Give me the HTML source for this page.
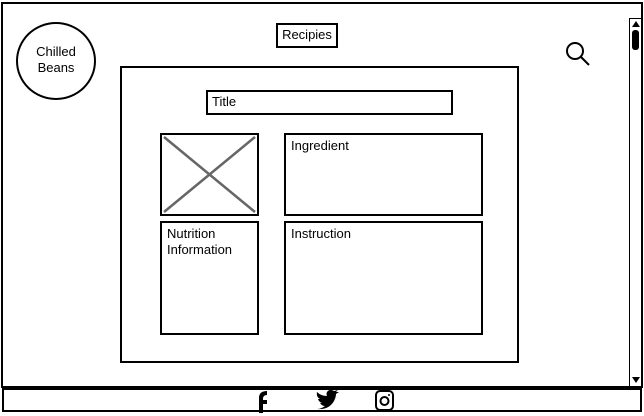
<!DOCTYPE html>
<html><head><style>
body{margin:0;width:644px;height:416px;background:#fff;position:relative;overflow:hidden;font-family:"Liberation Sans",sans-serif;font-size:13px;color:#000}
.b{position:absolute;border:2px solid #000;box-sizing:border-box;background:#fff}
.t{position:absolute;font-size:13px}
</style></head><body>
<div class="b" style="left:1px;top:2px;width:642px;height:386px;border-width:2px"></div>
<div class="b" style="left:629px;top:18px;width:13px;height:369px;border-width:1px"></div>
<div style="position:absolute;left:632px;top:21px;width:0;height:0;border-left:4px solid transparent;border-right:4px solid transparent;border-bottom:6px solid #000"></div>
<div style="position:absolute;left:632px;top:30px;width:7px;height:20px;background:#000;border-radius:3px"></div>
<div style="position:absolute;left:632px;top:377px;width:0;height:0;border-left:4px solid transparent;border-right:4px solid transparent;border-top:6px solid #000"></div>
<div class="b" style="left:16px;top:22px;width:80px;height:78px;border-radius:50%"></div>
<div class="t" style="left:16px;top:44px;width:80px;text-align:center;line-height:16px">Chilled<br>Beans</div>
<div class="b" style="left:276px;top:23px;width:62px;height:25px"></div>
<div class="t" style="left:276px;top:27px;width:62px;text-align:center">Recipies</div>
<svg style="position:absolute;left:562px;top:38px" width="30" height="30"><circle cx="13" cy="13" r="8" fill="none" stroke="#000" stroke-width="2"/><line x1="19" y1="19" x2="27" y2="27" stroke="#000" stroke-width="2"/></svg>
<div class="b" style="left:120px;top:66px;width:399px;height:297px"></div>
<div class="b" style="left:206px;top:90px;width:247px;height:25px"></div>
<div class="t" style="left:212px;top:94px">Title</div>
<div class="b" style="left:160px;top:133px;width:99px;height:83px"></div>
<svg style="position:absolute;left:162px;top:135px" width="95" height="79"><line x1="2" y1="2" x2="93" y2="77" stroke="#666" stroke-width="2.5"/><line x1="93" y1="2" x2="2" y2="77" stroke="#666" stroke-width="2.5"/></svg>
<div class="b" style="left:284px;top:133px;width:199px;height:83px"></div>
<div class="t" style="left:291px;top:138px">Ingredient</div>
<div class="b" style="left:160px;top:221px;width:99px;height:114px"></div>
<div class="t" style="left:167px;top:226px;line-height:16px">Nutrition<br>Information</div>
<div class="b" style="left:284px;top:221px;width:199px;height:114px"></div>
<div class="t" style="left:291px;top:226px">Instruction</div>
<div class="b" style="left:2px;top:388px;width:640px;height:24px"></div>
<svg style="position:absolute;left:254px;top:389px" width="150" height="25">
<path d="M5 24 V9 Q5 2 13 2 V6 Q9 6 9 10 V11 H13 V15 H9 V24Z" fill="#000"/>
<path d="M63 20 Q75 21 80 12 Q82 8 82 5 L85 3 L82 3 L84 1 L80 2 Q76 -1 73 3 Q72 5 73 7 Q67 7 63 3 Q62 8 66 10 L64 10 Q65 13 68 14 L66 14 Q68 17 71 17 Q67 20 63 20Z" fill="#000"/>
<rect x="122" y="2" width="17" height="19" rx="4" fill="none" stroke="#000" stroke-width="2"/>
<circle cx="130.5" cy="12" r="4" fill="none" stroke="#000" stroke-width="2"/>
<circle cx="135" cy="6" r="1" fill="#000"/>
</svg>
</body></html>
